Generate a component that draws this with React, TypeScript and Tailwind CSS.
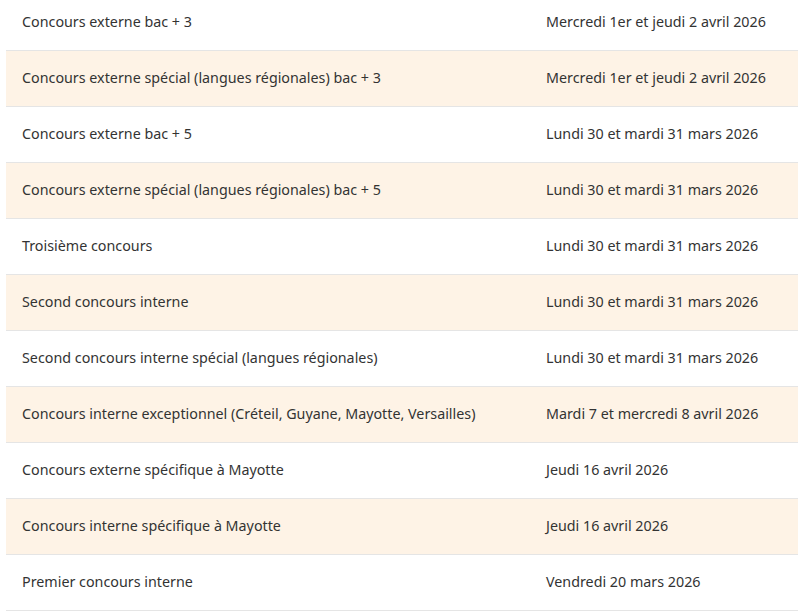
const ROWS: [string, string][] = [
  ['Concours externe bac + 3', 'Mercredi 1er et jeudi 2 avril 2026'],
  ['Concours externe spécial (langues régionales) bac + 3', 'Mercredi 1er et jeudi 2 avril 2026'],
  ['Concours externe bac + 5', 'Lundi 30 et mardi 31 mars 2026'],
  ['Concours externe spécial (langues régionales) bac + 5', 'Lundi 30 et mardi 31 mars 2026'],
  ['Troisième concours', 'Lundi 30 et mardi 31 mars 2026'],
  ['Second concours interne', 'Lundi 30 et mardi 31 mars 2026'],
  ['Second concours interne spécial (langues régionales)', 'Lundi 30 et mardi 31 mars 2026'],
  ['Concours interne exceptionnel (Créteil, Guyane, Mayotte, Versailles)', 'Mardi 7 et mercredi 8 avril 2026'],
  ['Concours externe spécifique à Mayotte', 'Jeudi 16 avril 2026'],
  ['Concours interne spécifique à Mayotte', 'Jeudi 16 avril 2026'],
  ['Premier concours interne', 'Vendredi 20 mars 2026'],
];

export default function App() {
  return (
    <div className="h-[611px] overflow-hidden bg-white pl-[6px] pr-px font-['Noto_Sans',sans-serif] text-[14.3px] text-[#333333]">
      <div className="-mt-[5px]">
        {ROWS.map(([label, date], i) => (
          <div
            key={label}
            className={`grid h-[56px] grid-cols-[540px_1fr] items-center border-b border-[#e5e5e5] pb-[2px] ${
              i % 2 === 1 ? 'bg-[#fef3e6]' : 'bg-white'
            }`}
          >
            <span className="pl-4">{label}</span>
            <span>{date}</span>
          </div>
        ))}
      </div>
    </div>
  );
}
